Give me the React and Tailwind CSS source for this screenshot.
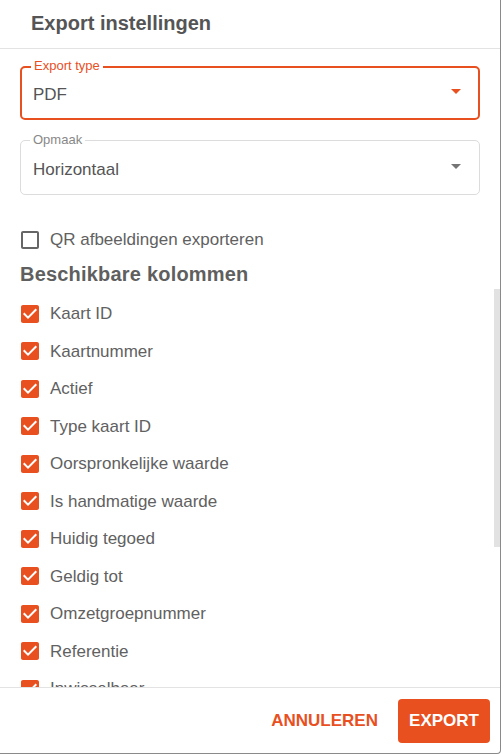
const ORANGE = "#e8501f";

const columns = [
  "Kaart ID",
  "Kaartnummer",
  "Actief",
  "Type kaart ID",
  "Oorspronkelijke waarde",
  "Is handmatige waarde",
  "Huidig tegoed",
  "Geldig tot",
  "Omzetgroepnummer",
  "Referentie",
  "Inwisselbaar",
  "Geblokkeerd",
];

function CheckIcon({ checked }) {
  if (checked) {
    return (
      <svg width="24" height="24" viewBox="0 0 24 24" className="shrink-0">
        <path
          fill={ORANGE}
          d="M19 3H5c-1.11 0-2 .9-2 2v14c0 1.1.89 2 2 2h14c1.11 0 2-.9 2-2V5c0-1.1-.89-2-2-2zm-9 14l-5-5 1.41-1.41L10 14.17l7.59-7.59L19 8l-9 9z"
        />
      </svg>
    );
  }
  return (
    <svg width="24" height="24" viewBox="0 0 24 24" className="shrink-0">
      <path
        fill="#666"
        d="M19 5v14H5V5h14m0-2H5c-1.1 0-2 .9-2 2v14c0 1.1.9 2 2 2h14c1.1 0 2-.9 2-2V5c0-1.1-.9-2-2-2z"
      />
    </svg>
  );
}

function Arrow({ color }) {
  return (
    <svg width="24" height="24" viewBox="0 0 24 24" className="shrink-0 ml-auto -mt-[4px]">
      <path fill={color} d="M7 10l5 5 5-5z" />
    </svg>
  );
}

function CheckRow({ label, checked }) {
  return (
    <div className="flex items-center h-[37.5px] pl-[18px] gap-[8px] text-[17px] text-[#616161]">
      <CheckIcon checked={checked} />
      <span>{label}</span>
    </div>
  );
}

export default function App() {
  return (
    <div
      className="w-[501px] h-[754px] bg-white flex flex-col border-r border-b border-[#8a8a8a] rounded-br-[4px] overflow-hidden"
      style={{ fontFamily: '"Liberation Sans", Arial, sans-serif' }}
    >
      <div className="h-[49px] shrink-0 border-b border-[#e3e3e3] flex items-center pl-[31px]">
        <h2 className="text-[20px] font-bold text-[#555] leading-none -mt-[2px]">Export instellingen</h2>
      </div>

      <div className="flex-1 relative overflow-hidden">
        <div className="px-[20px] pt-[17px]">
          <div className="relative h-[54px] border-2 border-[#e8501f] rounded-[5px] flex items-center pl-[11px] pr-[10px]">
            <span className="absolute -top-[10px] left-[9px] px-[3px] bg-white text-[13px] text-[#e8501f] leading-[16px]">
              Export type
            </span>
            <span className="text-[17px] text-[#555] pt-[4px]">PDF</span>
            <Arrow color={ORANGE} />
          </div>

          <div className="relative mt-[20px] h-[55px] border border-[#dcdcdc] rounded-[5px] flex items-center pl-[12px] pr-[11px]">
            <span className="absolute -top-[9px] left-[9px] px-[3px] bg-white text-[13px] text-[#888] leading-[16px]">
              Opmaak
            </span>
            <span className="text-[17px] text-[#555] pt-[4px]">Horizontaal</span>
            <Arrow color="#757575" />
          </div>
        </div>

        <div className="mt-[26px]">
          <div className="flex items-center h-[38px] pl-[18px] gap-[8px] text-[17px] text-[#616161]">
            <CheckIcon checked={false} />
            <span>QR afbeeldingen exporteren</span>
          </div>

          <h3 className="pl-[20px] mt-[5px] mb-[11px] text-[20px] leading-[20px] font-bold text-[#5f5f5f] tracking-[0.01em]">
            Beschikbare kolommen
          </h3>

          {columns.map((c) => (
            <CheckRow key={c} label={c} checked />
          ))}
        </div>

        <div className="absolute right-0 top-[240px] w-[6px] h-[258px] bg-[#e2e2e2]" />
      </div>

      <div className="h-[66px] shrink-0 border-t border-[#e3e3e3] flex items-center justify-end gap-[12px] pr-[10px]">
        <button className="px-[8px] h-[44px] text-[17px] font-bold text-[#e8501f] uppercase">Annuleren</button>
        <button className="w-[92px] h-[44px] rounded-[4px] bg-[#e8501f] text-white text-[17px] font-bold uppercase">
          Export
        </button>
      </div>
    </div>
  );
}
